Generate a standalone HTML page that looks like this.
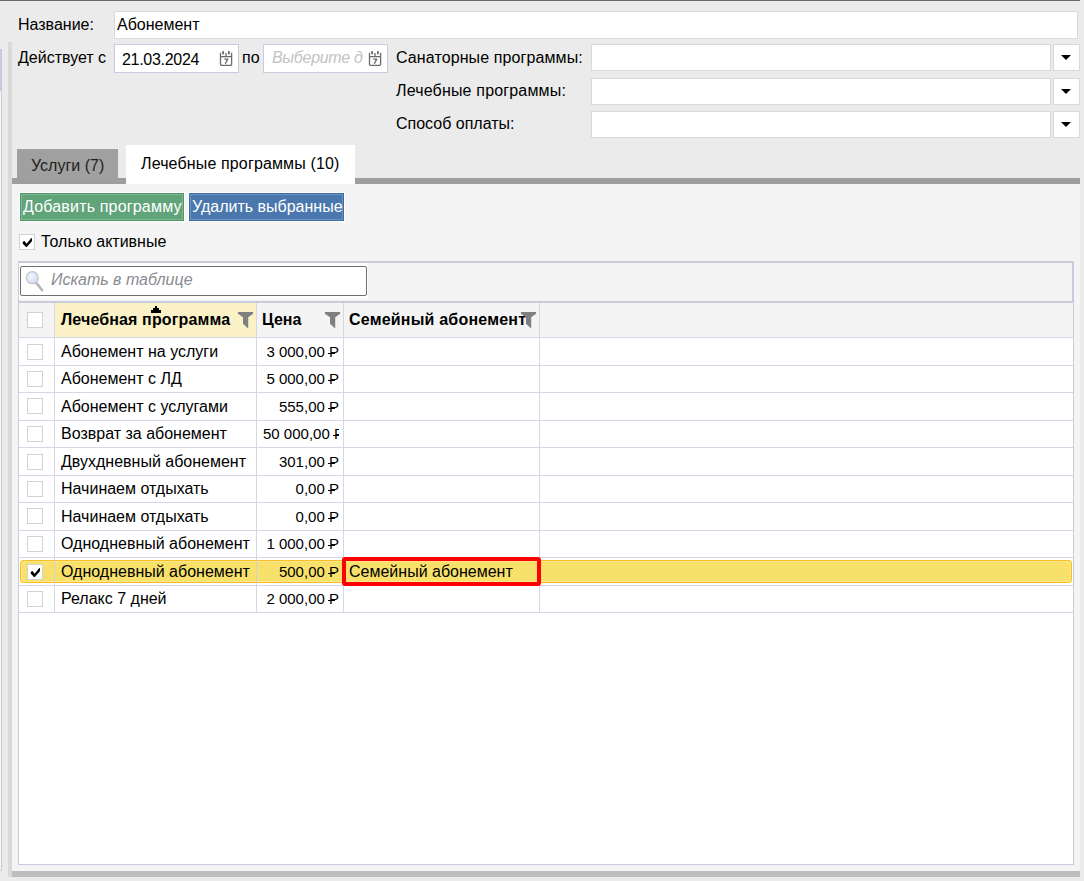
<!DOCTYPE html>
<html><head><meta charset="utf-8">
<style>
*{box-sizing:border-box;margin:0;padding:0}
html,body{width:1084px;height:881px;overflow:hidden;background:#ebebeb}
body{position:relative;font-family:"Liberation Sans",sans-serif;font-size:16px;color:#000}
.a{position:absolute}
.t{position:absolute;white-space:nowrap;line-height:18px;font-size:16px}
.inp{position:absolute;background:#fff;border:1px solid #d9d9d9}
.dinp{position:absolute;background:#fff;border:1px solid #cacbdd}
.btn{position:absolute;background:#fff;border:1px solid #d9d9d9}
.tri{position:absolute;width:0;height:0;border-left:5px solid transparent;border-right:5px solid transparent;border-top:5px solid #000}
.cb{position:absolute;width:16px;height:16px;background:#fff;border:1px solid #d2d2d2}
.hl{position:absolute;left:0;width:1055px;height:1px;background:#d6d7e5}
.vl{position:absolute;width:1px;background:#d6d7e5}
.rub{position:relative;display:inline-block}
.rub:after{content:"";position:absolute;left:-1px;width:7px;height:1.3px;background:currentColor;top:10px}
.cell{position:absolute;white-space:nowrap;line-height:18px;font-size:15px;overflow:hidden}
</style></head><body>
<!-- top dark line -->
<div class="a" style="left:0;top:0;width:1080px;height:1px;background:#6a6a6a"></div>
<!-- left edge lavender -->
<div class="a" style="left:0;top:49px;width:2px;height:42px;background:#c8cadb"></div>
<div class="a" style="left:0;top:91px;width:1px;height:779px;background:#f6f6f8"></div>
<div class="a" style="left:1px;top:91px;width:1px;height:780px;background:#c8cadb"></div>
<div class="a" style="left:0;top:870px;width:2px;height:1px;background:#c8cadb"></div>
<!-- gray vertical stripe -->
<div class="a" style="left:8px;top:42px;width:4px;height:835px;background:#d9d9d9"></div>

<!-- form -->
<div class="t" style="left:18px;top:16px">Название:</div>
<div class="inp" style="left:114px;top:11px;width:964px;height:28px"></div>
<div class="t" style="left:117px;top:16px">Абонемент</div>

<div class="t" style="left:18px;top:49px">Действует с</div>
<div class="dinp" style="left:114px;top:44px;width:125px;height:29px"></div>
<div class="t" style="left:122px;top:51px;letter-spacing:-0.3px">21.03.2024</div>
<svg class="a" style="left:214px;top:47px" width="24" height="23" viewBox="0 0 24 23">
<path d="M6.5 5.8 V17.6 Q6.5 18.4 7.3 18.4 H16.8 Q17.6 18.4 17.6 17.6 V5.8 M6.5 9.7 H17.6 M12 5.9 V9.7" fill="none" stroke="#6b6b6b" stroke-width="1.3"/>
<ellipse cx="9.1" cy="5.7" rx="0.95" ry="1.9" fill="#666"/><ellipse cx="14.9" cy="5.7" rx="0.95" ry="1.9" fill="#666"/>
<path d="M10.3 12.1 H13.7 L11.3 16.8" fill="none" stroke="#6b6b6b" stroke-width="1.4" stroke-linejoin="round"/>
</svg>
<div class="t" style="left:242px;top:49px">по</div>
<div class="dinp" style="left:263px;top:44px;width:125px;height:29px"></div>
<div class="t" style="left:272px;top:49px;letter-spacing:-0.3px;font-style:italic;color:#c3c3c3">Выберите д</div>
<svg class="a" style="left:363px;top:47px" width="24" height="23" viewBox="0 0 24 23">
<path d="M6.5 5.8 V17.6 Q6.5 18.4 7.3 18.4 H16.8 Q17.6 18.4 17.6 17.6 V5.8 M6.5 9.7 H17.6 M12 5.9 V9.7" fill="none" stroke="#6b6b6b" stroke-width="1.3"/>
<ellipse cx="9.1" cy="5.7" rx="0.95" ry="1.9" fill="#666"/><ellipse cx="14.9" cy="5.7" rx="0.95" ry="1.9" fill="#666"/>
<path d="M10.3 12.1 H13.7 L11.3 16.8" fill="none" stroke="#6b6b6b" stroke-width="1.4" stroke-linejoin="round"/>
</svg>

<div class="t" style="left:396px;top:49px;letter-spacing:0.1px">Санаторные программы:</div>
<div class="t" style="left:396px;top:82px;letter-spacing:0.17px">Лечебные программы:</div>
<div class="t" style="left:396px;top:115px">Способ оплаты:</div>
<div class="inp" style="left:591px;top:44px;width:460px;height:27px"></div>
<div class="btn" style="left:1053px;top:44px;width:27px;height:27px"></div>
<div class="tri" style="left:1061px;top:55px"></div>
<div class="inp" style="left:591px;top:78px;width:460px;height:27px"></div>
<div class="btn" style="left:1053px;top:78px;width:27px;height:27px"></div>
<div class="tri" style="left:1061px;top:89px"></div>
<div class="inp" style="left:591px;top:111px;width:460px;height:27px"></div>
<div class="btn" style="left:1053px;top:111px;width:27px;height:27px"></div>
<div class="tri" style="left:1061px;top:122px"></div>

<!-- tabs -->
<div class="a" style="left:17px;top:149px;width:101px;height:30px;background:#a0a0a0"></div>
<div class="t" style="left:31px;top:157px;color:#1e1e1e">Услуги (7)</div>
<div class="a" style="left:12px;top:178px;width:1068px;height:6px;background:#9e9e9e"></div>
<div class="a" style="left:126px;top:145px;width:229px;height:39px;background:#fff"></div>
<div class="t" style="left:141px;top:155px;letter-spacing:0.14px">Лечебные программы (10)</div>

<!-- content panel -->
<div class="a" style="left:12px;top:184px;width:1068px;height:687px;background:#f4f4f4"></div>
<div class="a" style="left:12px;top:871px;width:1068px;height:6px;background:#bdbdbd"></div>

<div class="a" style="left:20px;top:193px;width:164px;height:28px;background:#62a47a;border:1px solid #4f9668;box-shadow:inset 0 0 0 1px #80b893,0 0 0 1px #fff"></div>
<div class="t" style="left:23px;top:198px;color:#fff;letter-spacing:0.18px">Добавить программу</div>
<div class="a" style="left:189px;top:193px;width:155px;height:28px;background:#4a78ae;border:1px solid #3e6ba3;box-shadow:inset 0 0 0 1px #6c92c0,0 0 0 1px #fff"></div>
<div class="t" style="left:192px;top:198px;color:#fff">Удалить выбранные</div>

<div class="cb" style="left:19px;top:234px"></div>
<svg class="a" style="left:18px;top:233px" width="18" height="18" viewBox="0 0 18 18"><path d="M4.8 8.7 L6.5 8.0 L8.6 10.8 L13.3 5.0 L14.1 5.2 L13.9 8.2 L8.8 13.9 L8.0 13.9 L4.8 10.7 Z" fill="#000"/></svg>
<div class="t" style="left:41px;top:233px">Только активные</div>

<!-- table -->
<div id="tbl" class="a" style="left:18px;top:261px;width:1056px;height:604px;border:1px solid #c9cbdd;background:#fff">
</div>
<div class="a" style="left:19px;top:262px;width:1054px;height:40px;background:#f4f4f4"></div>
<div class="a" style="left:18px;top:261px;width:1056px;height:2px;background:#c9cbdd"></div>
<div class="a" style="left:1072px;top:261px;width:2px;height:42px;background:#c9cbdd"></div>
<div class="a" style="left:19px;top:301px;width:1054px;height:2px;background:#c9cbdd"></div>
<div class="a" style="left:19px;top:263px;width:349px;height:36px;background:#fcfcfc"></div>
<div class="a" style="left:20px;top:266px;width:347px;height:30px;background:#fff;border:1px solid #707070;border-radius:2px"></div>
<svg class="a" style="left:24px;top:270px" width="20" height="22" viewBox="0 0 20 22">
<defs><radialGradient id="g" cx="0.4" cy="0.35" r="0.7"><stop offset="0" stop-color="#f2f8ff"/><stop offset="1" stop-color="#c9daf0"/></radialGradient></defs>
<line x1="12" y1="12.5" x2="18" y2="20" stroke="#b5b5b5" stroke-width="2.6" stroke-linecap="round"/>
<circle cx="8.3" cy="7.7" r="6" fill="url(#g)" stroke="#c8c8c8" stroke-width="1.3"/>
</svg>
<div class="t" style="left:51px;top:271px;font-style:italic;color:#8a8c92">Искать в таблице</div>

<!-- header -->
<div class="a" style="left:19px;top:303px;width:35px;height:34px;background:#f4f4f4"></div>
<div class="a" style="left:55px;top:303px;width:201px;height:34px;background:#faf1c6"></div>
<div class="a" style="left:257px;top:303px;width:816px;height:34px;background:#f4f4f4"></div>
<div class="cb" style="left:27px;top:312px"></div>
<div class="t" style="left:61px;top:311px;font-weight:bold;letter-spacing:0.13px">Лечебная программа</div>
<svg class="a" style="left:151px;top:306px" width="10" height="7" viewBox="0 0 10 7"><rect x="4" y="0" width="2" height="2"/><rect x="2" y="2" width="6" height="2"/><rect x="0" y="4" width="10" height="3"/></svg>
<svg class="a" style="left:237px;top:312px" width="17" height="17" viewBox="0 0 17 17"><path d="M0.95 0 H16.1 V1.8 L11.2 5.3 V15.9 H10.6 L6 11.8 V5.3 L0.95 1.8 Z" fill="#7f7f7f"/></svg>
<div class="t" style="left:262px;top:311px;font-weight:bold">Цена</div>
<svg class="a" style="left:324px;top:312px" width="17" height="17" viewBox="0 0 17 17"><path d="M0.95 0 H16.1 V1.8 L11.2 5.3 V15.9 H10.6 L6 11.8 V5.3 L0.95 1.8 Z" fill="#7f7f7f"/></svg>
<div class="t" style="left:349px;top:311px;font-weight:bold;letter-spacing:0.2px">Семейный абонемент</div>
<svg class="a" style="left:520px;top:312px" width="17" height="17" viewBox="0 0 17 17"><path d="M0.95 0 H16.1 V1.8 L11.2 5.3 V15.9 H10.6 L6 11.8 V5.3 L0.95 1.8 Z" fill="#7f7f7f"/></svg>

<!--GRID-->
<div class="hl" style="left:19px;top:337px;width:1054px"></div>
<div class="hl" style="left:19px;top:365px;width:1054px"></div>
<div class="hl" style="left:19px;top:392px;width:1054px"></div>
<div class="hl" style="left:19px;top:420px;width:1054px"></div>
<div class="hl" style="left:19px;top:447px;width:1054px"></div>
<div class="hl" style="left:19px;top:475px;width:1054px"></div>
<div class="hl" style="left:19px;top:502px;width:1054px"></div>
<div class="hl" style="left:19px;top:530px;width:1054px"></div>
<div class="hl" style="left:19px;top:557px;width:1054px"></div>
<div class="hl" style="left:19px;top:585px;width:1054px"></div>
<div class="hl" style="left:19px;top:612px;width:1054px"></div>
<div class="vl" style="left:54px;top:303px;height:310px"></div>
<div class="vl" style="left:256px;top:303px;height:310px"></div>
<div class="vl" style="left:343px;top:303px;height:310px"></div>
<div class="vl" style="left:539px;top:303px;height:310px"></div>
<!--/GRID-->
<!--ROWS-->
<div class="cb" style="left:27px;top:344px"></div>
<div class="t" style="left:61px;top:343px">Абонемент на услуги</div>
<div class="cell" style="left:263px;top:343px;width:76px;text-align:right"><span class="pr">3 000,00 <span class="rub">P</span></span></div>
<div class="cb" style="left:27px;top:371px"></div>
<div class="t" style="left:61px;top:370px">Абонемент с ЛД</div>
<div class="cell" style="left:263px;top:370px;width:76px;text-align:right"><span class="pr">5 000,00 <span class="rub">P</span></span></div>
<div class="cb" style="left:27px;top:398px"></div>
<div class="t" style="left:61px;top:398px">Абонемент с услугами</div>
<div class="cell" style="left:263px;top:398px;width:76px;text-align:right"><span class="pr">555,00 <span class="rub">P</span></span></div>
<div class="cb" style="left:27px;top:426px"></div>
<div class="t" style="left:61px;top:425px">Возврат за абонемент</div>
<div class="cell" style="left:263px;top:425px;width:76px;text-align:right"><span class="pr">50 000,00 <span class="rub">P</span></span></div>
<div class="cb" style="left:27px;top:454px"></div>
<div class="t" style="left:61px;top:453px">Двухдневный абонемент</div>
<div class="cell" style="left:263px;top:453px;width:76px;text-align:right"><span class="pr">301,00 <span class="rub">P</span></span></div>
<div class="cb" style="left:27px;top:481px"></div>
<div class="t" style="left:61px;top:480px">Начинаем отдыхать</div>
<div class="cell" style="left:263px;top:480px;width:76px;text-align:right"><span class="pr">0,00 <span class="rub">P</span></span></div>
<div class="cb" style="left:27px;top:508px"></div>
<div class="t" style="left:61px;top:508px">Начинаем отдыхать</div>
<div class="cell" style="left:263px;top:508px;width:76px;text-align:right"><span class="pr">0,00 <span class="rub">P</span></span></div>
<div class="cb" style="left:27px;top:536px"></div>
<div class="t" style="left:61px;top:535px">Однодневный абонемент</div>
<div class="cell" style="left:263px;top:535px;width:76px;text-align:right"><span class="pr">1 000,00 <span class="rub">P</span></span></div>
<div class="a" style="left:20px;top:560px;width:1052px;height:23px;background:#f8e16a;border:1px solid #fbbd22;border-radius:3px;box-shadow:inset 0 0 0 1px #fbe88e"></div>
<div class="vl" style="left:54px;top:560px;height:23px;background:#cfd0dc"></div>
<div class="vl" style="left:256px;top:560px;height:23px;background:#cfd0dc"></div>
<div class="cb" style="left:27px;top:564px"></div>
<svg class="a" style="left:25.5px;top:563px" width="18" height="18" viewBox="0 0 18 18"><path d="M4.8 8.7 L6.5 8.0 L8.6 10.8 L13.3 5.0 L14.1 5.2 L13.9 8.2 L8.8 13.9 L8.0 13.9 L4.8 10.7 Z" fill="#000"/></svg>
<div class="t" style="left:61px;top:563px">Однодневный абонемент</div>
<div class="cell" style="left:263px;top:563px;width:76px;text-align:right"><span class="pr">500,00 <span class="rub">P</span></span></div>
<div class="a" style="left:342px;top:557px;width:199px;height:29px;border:4px solid #ff0000;border-radius:3px"></div>
<div class="t" style="left:349px;top:563px">Семейный абонемент</div>
<div class="cb" style="left:27px;top:591px"></div>
<div class="t" style="left:61px;top:590px">Релакс 7 дней</div>
<div class="cell" style="left:263px;top:590px;width:76px;text-align:right"><span class="pr">2 000,00 <span class="rub">P</span></span></div>
<!--/ROWS-->
</body></html>
